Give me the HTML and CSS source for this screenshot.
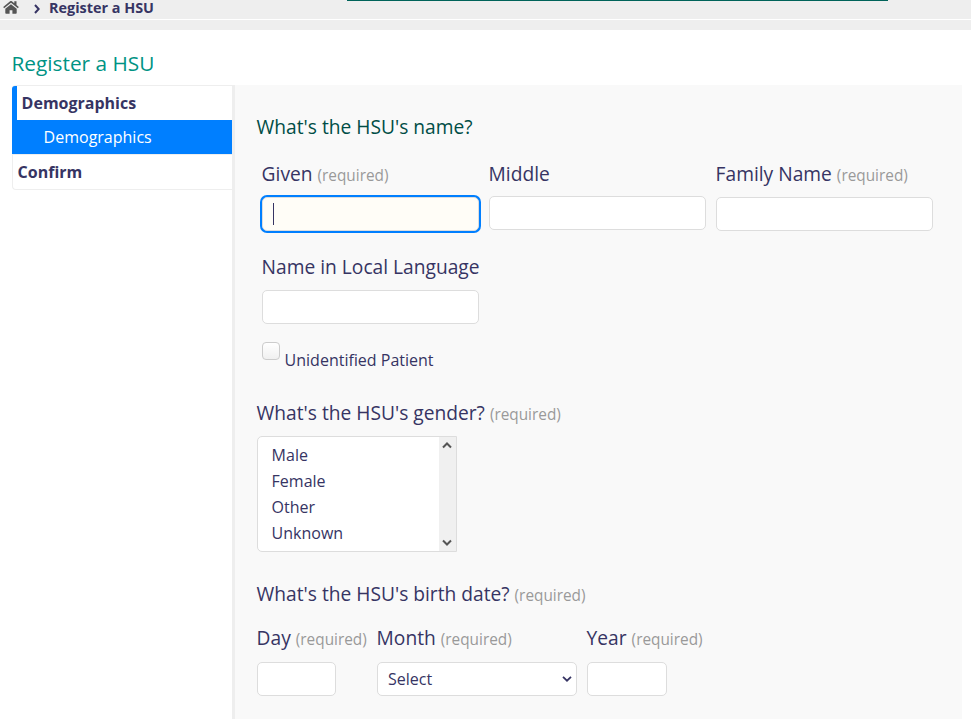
FILE: index.html
```html
<!DOCTYPE html>
<html lang="en">
<head>
<meta charset="utf-8">
<title>Register a HSU</title>
<link rel="stylesheet" href="styles.css">
</head>
<body>
<div class="header-edge"></div>
<nav class="breadcrumbs">
  <svg class="home" width="16" height="13" viewBox="0 0 16 13"><path d="M8 3.2 2.3 7.7V12q0 .8.8.8h3.5V9.2h2.8v3.6h3.5q.8 0 .8-.8V7.7zM7.1.3.2 6l.9 1.2L8 1.7l6.9 5.5.9-1.2-2.3-1.9V.3h-2.2v2L8.9.3Q8-.4 7.1.3z"/></svg>
  <svg class="chevron" width="6" height="10" viewBox="0 0 6 10"><path d="M1 1 4.7 5 1 9"/></svg>
  <span>Register a HSU</span>
</nav>
<div class="breadcrumb-foot"></div>
<h1>Register a HSU</h1>
<main class="layout">
  <ul class="steps">
    <li class="step active">Demographics</li>
    <li class="substep">Demographics</li>
    <li class="step last">Confirm</li>
  </ul>
  <form class="panel">
    <h2>What's the HSU's name?</h2>
    <div class="names">
      <div class="field"><label>Given <small>(required)</small></label><div class="input focused"><span class="caret"></span></div></div>
      <div class="field middle"><label>Middle</label><div class="input"></div></div>
      <div class="field"><label>Family Name <small>(required)</small></label><div class="input"></div></div>
    </div>
    <div class="field local"><label>Name in Local Language</label><div class="input"></div></div>
    <div class="check"><span class="box"></span><span class="check-label">Unidentified Patient</span></div>
    <h3 class="gender-title">What's the HSU's gender? <small>(required)</small></h3>
    <div class="listbox">
      <ul><li>Male</li><li>Female</li><li>Other</li><li>Unknown</li></ul>
      <div class="scrollbar">
        <svg width="10" height="7" viewBox="0 0 10 7"><path d="M1 5.5 5 1.5 9 5.5"/></svg>
        <svg width="10" height="7" viewBox="0 0 10 7"><path d="M1 1.5 5 5.5 9 1.5"/></svg>
      </div>
    </div>
    <h3 class="birth-title">What's the HSU's birth date? <small>(required)</small></h3>
    <div class="dates">
      <div class="field day"><label>Day <small>(required)</small></label><div class="input"></div></div>
      <div class="field month"><label>Month <small>(required)</small></label><div class="input select"><span>Select</span><svg width="10" height="6" viewBox="0 0 10 6"><path d="M1 .9 5 4.7 9 .9"/></svg></div></div>
      <div class="field year"><label>Year <small>(required)</small></label><div class="input"></div></div>
    </div>
  </form>
</main>
</body>
</html>
```

FILE: styles.css
```css
* { box-sizing: border-box; }
body { margin: 0; height: 719px; overflow: hidden; background: #fff; color: #363463; font-family: "Open Sans", sans-serif; font-size: 16px; }
h1, h2, h3, ul { margin: 0; padding: 0; font-weight: 400; list-style: none; }
.header-edge { height: 1px; background: linear-gradient(#00635a, #00635a) 347px 0 / 541px 1px no-repeat #eee; }
.breadcrumbs { height: 18px; display: flex; align-items: flex-start; background: #eee; font-size: 14.4px; font-weight: 700; line-height: 14px; }
.breadcrumbs span { margin-left: 9px; }
.home { margin-left: 3px; fill: #555; }
.chevron { margin: 3px 0 0 15px; fill: none; stroke: #363463; stroke-width: 2; }
.breadcrumb-foot { height: 10px; margin-top: 1px; background: #eee; }
h1 { margin: 19px 0 0 11.5px; height: 36px; font-size: 20.8px; line-height: 28px; color: #009384; white-space: nowrap; }
.layout { display: flex; align-items: flex-start; margin-left: 12px; width: 950px; }
.steps { width: 220px; height: 105px; border: 1px solid #eee; border-right: 0; border-radius: 4px 0 0 4px; }
.step { font-weight: 700; height: 34px; line-height: 34px; padding-left: 4.6px; }
.active { border-left: 5px solid #007fff; margin-left: -1px; border-top-left-radius: 3px; }
.substep { height: 34px; margin-left: -1px; padding-left: 31.6px; line-height: 34px; background: #007fff; color: #fff; }
.last { border-top: 1px solid #eee; height: 35px; }
.panel { width: 730px; height: 634px; border-left: 3px solid #eee; background: #f9f9f9; padding: 29px 0 0 22px; }
h2, h3, label { display: block; font-size: 19.2px; line-height: 26px; height: 26px; white-space: nowrap; text-indent: -.4px; }
h2 { color: #004d46; }
small { font-size: 15.36px; color: #999; }
.names { display: flex; gap: 10px; margin: 21px 0 0 5px; }
.field { width: 217px; }
.input { height: 34px; margin-top: 10px; background: #fff; border: 1px solid #ddd; border-radius: 5px; }
.middle .input { margin-top: 9px; }
.focused { background: #fffdf7; box-shadow: 0 0 0 2px #007fff; padding: 5px 0 0 10px; }
.caret { display: block; width: 1px; height: 22px; background: #363463; }
.local { margin: 23px 0 0 5px; }
.check { display: flex; align-items: flex-start; height: 32px; margin: 18px 0 0 5px; }
.box { width: 18px; height: 18px; border: 1px solid #ccc; border-radius: 4px; background: linear-gradient(#fff, #f0f0f0); }
.check-label { margin: 7px 0 0 4.6px; line-height: 22px; }
.gender-title { margin-top: 26px; }
.listbox { width: 200px; height: 116px; display: flex; margin-top: 10px; border: 1px solid #ddd; border-radius: 5px 0 0 5px; background: #fff; }
.listbox ul { flex: 1; padding: 5px 0 0 13.6px; line-height: 26px; }
.scrollbar { width: 17px; display: flex; flex-direction: column; justify-content: space-between; align-items: flex-start; padding: 5px 0 5px 3px; background: #f0f0f0; }
.scrollbar svg { fill: none; stroke: #555; stroke-width: 2; }
.birth-title { margin-top: 29px; }
.dates { display: flex; margin-top: 18px; }
.dates .input { margin-top: 11px; }
.day { width: 79px; margin-right: 41px; }
.month { width: 200px; margin-right: 10px; }
.year { width: 80px; }
.select { display: flex; align-items: center; justify-content: space-between; padding: 0 4px 0 10px; }
.select svg { fill: none; stroke: #363463; stroke-width: 1.8; }
```
